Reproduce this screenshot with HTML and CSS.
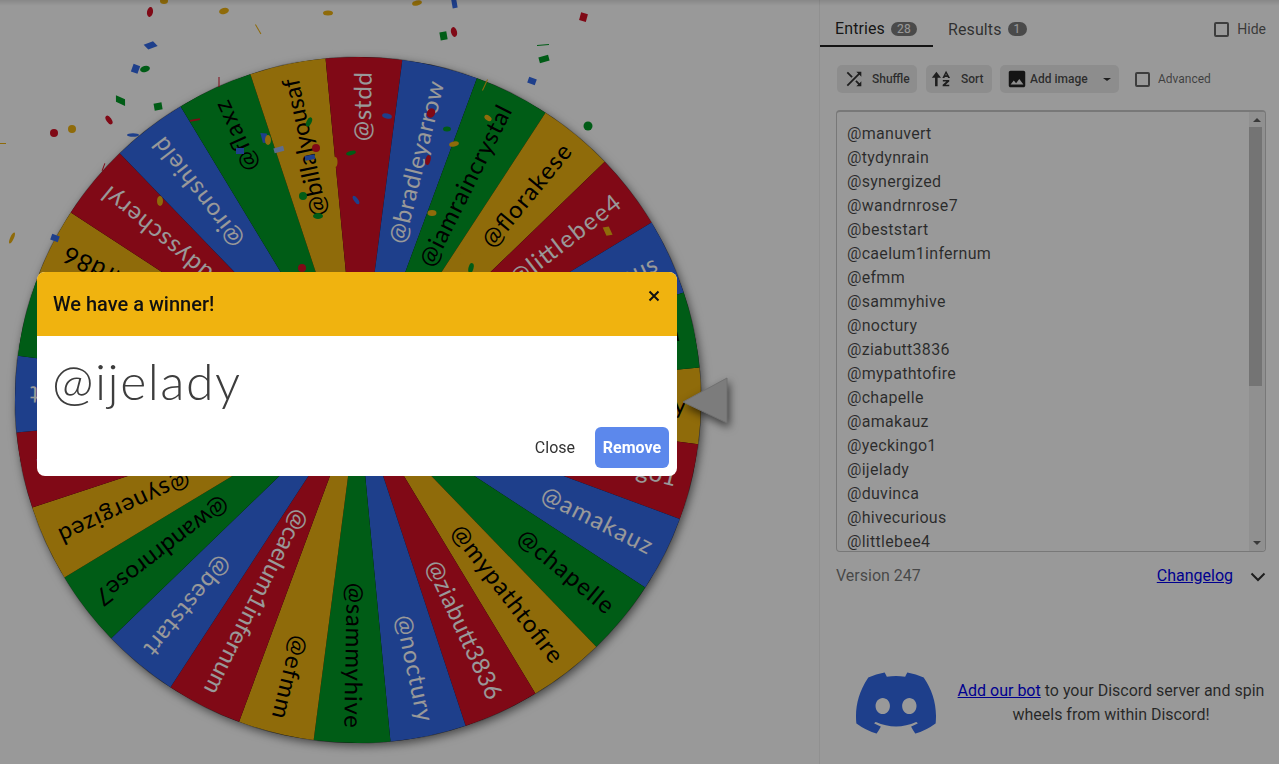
FILE: index.html
```html
<!DOCTYPE html>
<html lang="en">
<head>
<meta charset="utf-8">
<title>Wheel of Names</title>
<link rel="stylesheet" href="styles.css">
</head>
<body>
<div class="app">
  <main class="stage">
    <svg class="canvas" width="819" height="764" viewBox="0 0 819 764" xmlns="http://www.w3.org/2000/svg">
      <defs>
        <path id="w" d="M0 0L340.84 -38.4A343 343 0 0 1 340.84 38.4Z"/>
      </defs>
      <g transform="translate(358 400) rotate(1)">
        <circle class="disc" r="343"/>
        <g class="sl-y"><use href="#w"/><text x="328" y="8" textLength="105">@ijelady</text></g>
        <g class="sl-r" transform="rotate(12.857)"><use href="#w"/><text x="328" y="8" textLength="130">@yeckingo1</text></g>
        <g class="sl-b" transform="rotate(25.714)"><use href="#w"/><text x="328" y="8" textLength="121">@amakauz</text></g>
        <g class="sl-g" transform="rotate(38.571)"><use href="#w"/><text x="328" y="8" textLength="117">@chapelle</text></g>
        <g class="sl-y" transform="rotate(51.429)"><use href="#w"/><text x="328" y="8" textLength="167">@mypathtofire</text></g>
        <g class="sl-r" transform="rotate(64.286)"><use href="#w"/><text x="328" y="8" textLength="150">@ziabutt3836</text></g>
        <g class="sl-b" transform="rotate(77.143)"><use href="#w"/><text x="328" y="8" textLength="108">@noctury</text></g>
        <g class="sl-g" transform="rotate(90)"><use href="#w"/><text x="328" y="8" textLength="145">@sammyhive</text></g>
        <g class="sl-y" transform="rotate(102.857)"><use href="#w"/><text x="328" y="8" textLength="85">@efmm</text></g>
        <g class="sl-r" transform="rotate(115.714)"><use href="#w"/><text x="328" y="8" textLength="204">@caelum1infernum</text></g>
        <g class="sl-b" transform="rotate(128.571)"><use href="#w"/><text x="328" y="8" textLength="122">@beststart</text></g>
        <g class="sl-g" transform="rotate(141.429)"><use href="#w"/><text x="328" y="8" textLength="162">@wandrnrose7</text></g>
        <g class="sl-y" transform="rotate(154.286)"><use href="#w"/><text x="328" y="8" textLength="142">@synergized</text></g>
        <g class="sl-r" transform="rotate(167.143)"><use href="#w"/><text x="328" y="8" textLength="135">@tydynrain</text></g>
        <g class="sl-b" transform="rotate(180)"><use href="#w"/><text x="328" y="8" textLength="125">@manuvert</text></g>
        <g class="sl-g" transform="rotate(192.857)"><use href="#w"/><text x="328" y="8" textLength="110">@elvira2</text></g>
        <g class="sl-y" transform="rotate(205.714)"><use href="#w"/><text x="328" y="8" textLength="130">@richard86</text></g>
        <g class="sl-r" transform="rotate(218.571)"><use href="#w"/><text x="328" y="8" textLength="185">@buddysscheryl</text></g>
        <g class="sl-b" transform="rotate(231.429)"><use href="#w"/><text x="328" y="8" textLength="132">@ironshield</text></g>
        <g class="sl-g" transform="rotate(244.286)"><use href="#w"/><text x="328" y="8" textLength="75">@flaxz</text></g>
        <g class="sl-y" transform="rotate(257.143)"><use href="#w"/><text x="328" y="8" textLength="140">@billalyousaf</text></g>
        <g class="sl-r" transform="rotate(270)"><use href="#w"/><text x="328" y="8" textLength="69">@stdd</text></g>
        <g class="sl-b" transform="rotate(282.857)"><use href="#w"/><text x="328" y="8" textLength="166">@bradleyarrow</text></g>
        <g class="sl-g" transform="rotate(295.714)"><use href="#w"/><text x="328" y="8" textLength="177">@iamraincrystal</text></g>
        <g class="sl-y" transform="rotate(308.571)"><use href="#w"/><text x="328" y="8" textLength="126">@florakese</text></g>
        <g class="sl-r" transform="rotate(321.429)"><use href="#w"/><text x="328" y="8" textLength="133">@littlebee4</text></g>
        <g class="sl-b" transform="rotate(334.286)"><use href="#w"/><text x="328" y="8" textLength="150">@hivecurious</text></g>
        <g class="sl-g" transform="rotate(347.143)"><use href="#w"/><text x="328" y="8" textLength="105">@duvinca</text></g>
      </g>
      <polygon class="pointer" points="683,402 727,378 727,423"/>
      <g class="confetti">
        <ellipse class="c-r" cx="150" cy="12" rx="3" ry="5" transform="rotate(10 150 12)"/>
        <ellipse class="c-y" cx="224" cy="11" rx="5" ry="3" transform="rotate(-15 224 11)"/>
        <ellipse class="c-y" cx="328" cy="13" rx="5" ry="2.5"/>
        <ellipse class="c-y" cx="164" cy="1" rx="4" ry="3"/>
        <rect class="c-y" x="258" y="24" width="1" height="11" transform="rotate(-30 258 30)"/>
        <rect class="c-b" x="122" y="51" width="10" height="6" transform="rotate(-20 127 54) skewX(25)"/>
        <rect class="c-b" x="239" y="48" width="6" height="10" transform="rotate(-15 242 53) skewY(20)"/>
        <rect class="c-b" x="132" y="65" width="7" height="8" transform="rotate(20 136 69)"/>
        <ellipse class="c-g" cx="145" cy="69" rx="5" ry="3" transform="rotate(-15 145 69)"/>
        <rect class="c-g" x="80" y="81" width="10" height="6" transform="rotate(25 85 84) skewX(25)"/>
        <rect class="c-g" x="154" y="103" width="8" height="7" transform="rotate(-10 158 106)"/>
        <rect class="c-r" x="218.500" y="77" width="1" height="10"/>
        <ellipse class="c-r" cx="109" cy="120" rx="2.500" ry="5" transform="rotate(-35 109 120)"/>
        <circle class="c-r" cx="54" cy="133" r="4"/>
        <circle class="c-y" cx="72" cy="129" r="4"/>
        <ellipse class="c-b" cx="133" cy="135" rx="6" ry="1.800"/>
        <rect class="c-y" x="0" y="143" width="6" height="1"/>
        <rect class="c-r" x="190" y="119" width="10" height="2" transform="rotate(-10 195 120)"/>
        <rect class="c-r" x="103" y="163" width="1" height="8" transform="rotate(20 103 167)"/>
        <ellipse class="c-y" cx="160" cy="201" rx="3" ry="5"/>
        <ellipse class="c-y" cx="12" cy="238" rx="1.800" ry="6" transform="rotate(25 12 238)"/>
        <rect class="c-b" x="51" y="235" width="8" height="6" transform="rotate(20 55 238)"/>
        <ellipse class="c-g" cx="309" cy="122" rx="2.500" ry="5" transform="rotate(25 309 122)"/>
        <circle class="c-r" cx="316" cy="148" r="4"/>
        <rect class="c-b" x="305" y="155" width="10" height="5" transform="rotate(-10 310 158)"/>
        <ellipse class="c-g" cx="303" cy="196" rx="4" ry="4"/>
        <ellipse class="c-g" cx="318" cy="216" rx="5" ry="3"/>
        <rect class="c-s" x="274" y="147" width="10" height="5" transform="rotate(-15 279 150)"/>
        <rect class="c-b" x="236" y="148" width="8" height="6"/>
        <ellipse class="c-y" cx="268" cy="140" rx="3" ry="5"/>
        <ellipse class="c-y" cx="335" cy="162" rx="2.500" ry="5"/>
        <ellipse class="c-g" cx="351" cy="153" rx="5" ry="2" transform="rotate(-15 351 153)"/>
        <ellipse class="c-b" cx="387" cy="116" rx="5" ry="2.500" transform="rotate(15 387 116)"/>
        <ellipse class="c-b" cx="356" cy="200" rx="2" ry="5" transform="rotate(-35 356 200)"/>
        <circle class="c-r" cx="302" cy="268" r="4"/>
        <ellipse class="c-y" cx="417" cy="3" rx="5" ry="2.500" transform="rotate(-15 417 3)"/>
        <rect class="c-b" x="452" y="-1" width="5" height="9" transform="rotate(-10 455 4)"/>
        <rect class="c-g" x="440" y="32" width="7" height="8" transform="rotate(-10 443 36)"/>
        <ellipse class="c-r" cx="454" cy="32" rx="3" ry="5" transform="rotate(-15 454 32)"/>
        <rect class="c-r" x="580" y="13" width="7" height="8" transform="rotate(15 583 17)"/>
        <rect class="c-g" x="537" y="44.500" width="12" height="1" transform="rotate(-5 543 45)"/>
        <rect class="c-g" x="539" y="56" width="10" height="6" transform="rotate(-15 544 59)"/>
        <rect class="c-b" x="528" y="78" width="8" height="6" transform="rotate(20 532 81)"/>
        <rect class="c-y" x="543" y="94" width="6" height="9" transform="rotate(-25 546 99) skewY(15)"/>
        <circle class="c-g" cx="588" cy="126" r="4.500"/>
        <rect class="c-y" x="484.500" y="79" width="1" height="12" transform="rotate(25 485 85)"/>
        <ellipse class="c-r" cx="431" cy="113" rx="4" ry="5" transform="rotate(30 431 113)"/>
        <ellipse class="c-g" cx="447" cy="129" rx="4" ry="2.500"/>
        <ellipse class="c-y" cx="454" cy="144" rx="5" ry="2.500" transform="rotate(-15 454 144)"/>
        <ellipse class="c-r" cx="428" cy="160" rx="2.500" ry="5" transform="rotate(15 428 160)"/>
        <ellipse class="c-y" cx="488" cy="118" rx="4" ry="2.500" transform="rotate(35 488 118)"/>
        <ellipse class="c-y" cx="432" cy="213" rx="4.500" ry="3"/>
        <ellipse class="c-y" cx="463" cy="250" rx="1.800" ry="5" transform="rotate(20 463 250)"/>
        <ellipse class="c-g" cx="471" cy="268" rx="2.500" ry="5" transform="rotate(15 471 268)"/>
      </g>
    </svg>
  </main>

  <aside class="side">
    <div class="tabs">
      <div class="tab tab-on">Entries<span class="badge badge-wide">28</span></div>
      <div class="tab">Results<span class="badge">1</span></div>
      <label class="hide"><span class="box"></span>Hide</label>
    </div>

    <div class="tools">
      <div class="btn btn-shuffle">
        <svg class="ico" viewBox="0 0 24 24"><path d="M10.59 9.17L5.41 4 4 5.41l5.17 5.17 1.42-1.41zM14.5 4l2.04 2.04L4 18.59 5.41 20 17.96 7.46 20 9.5V4h-5.5zm.33 9.41l-1.41 1.41 3.13 3.13L14.5 20H20v-5.5l-2.04 2.04-3.13-3.13z"/></svg>
        <span>Shuffle</span>
      </div>
      <div class="btn btn-sort">
        <svg class="ico" viewBox="0 0 24 24"><path d="M7 4L2 10.500h3.500V20h2.800v-9.500H12zM17.500 3L13.500 11h2.200l.5-1.300h3l.5 1.300h2.200zM16.800 8l.7-1.900.7 1.900zM14 13h7v1.800L17 18.300h4V20h-7.200v-1.800l4-3.500H14z"/></svg>
        <span>Sort</span>
      </div>
      <div class="btn btn-image">
        <svg class="ico ico-img" viewBox="0 0 24 24"><path d="M21 19V5c0-1.100-.9-2-2-2H5c-1.100 0-2 .9-2 2v14c0 1.100.9 2 2 2h14c1.100 0 2-.9 2-2zM8.500 13.500l2.500 3.010L14.500 12l4.500 6H5l3.500-4.500z"/></svg>
        <span>Add image</span>
        <i class="caret"></i>
      </div>
      <label class="adv"><span class="box"></span>Advanced</label>
    </div>

    <div class="entries">
      <div class="lines">
        <div>@manuvert</div>
        <div>@tydynrain</div>
        <div>@synergized</div>
        <div>@wandrnrose7</div>
        <div>@beststart</div>
        <div>@caelum1infernum</div>
        <div>@efmm</div>
        <div>@sammyhive</div>
        <div>@noctury</div>
        <div>@ziabutt3836</div>
        <div>@mypathtofire</div>
        <div>@chapelle</div>
        <div>@amakauz</div>
        <div>@yeckingo1</div>
        <div>@ijelady</div>
        <div>@duvinca</div>
        <div>@hivecurious</div>
        <div>@littlebee4</div>
      </div>
      <div class="sbar">
        <i class="arrow arrow-up"></i>
        <div class="thumb"></div>
        <i class="arrow arrow-down"></i>
      </div>
    </div>

    <div class="version">
      <span class="ver">Version 247</span>
      <a class="log" href="#">Changelog</a>
      <svg class="chev" viewBox="0 0 16 10"><path d="M1.500 1.500L8 8l6.500-6.500"/></svg>
    </div>

    <div class="discord">
      <svg class="dlogo" viewBox="0 0 24 24" preserveAspectRatio="none"><path d="M20.317 4.37a19.791 19.791 0 0 0-4.885-1.515.074.074 0 0 0-.079.037c-.21.375-.444.864-.608 1.25a18.27 18.27 0 0 0-5.487 0 12.64 12.64 0 0 0-.617-1.25.077.077 0 0 0-.079-.037A19.736 19.736 0 0 0 3.677 4.37a.07.07 0 0 0-.032.027C.533 9.046-.32 13.58.099 18.057a.082.082 0 0 0 .031.057 19.9 19.9 0 0 0 5.993 3.03.078.078 0 0 0 .084-.028 14.09 14.09 0 0 0 1.226-1.994.076.076 0 0 0-.041-.106 13.107 13.107 0 0 1-1.872-.892.077.077 0 0 1-.008-.128 10.2 10.2 0 0 0 .372-.292.074.074 0 0 1 .077-.01c3.928 1.793 8.18 1.793 12.062 0a.074.074 0 0 1 .078.01c.12.098.246.198.373.292a.077.077 0 0 1-.006.127 12.299 12.299 0 0 1-1.873.892.077.077 0 0 0-.041.107c.36.698.772 1.362 1.225 1.993a.076.076 0 0 0 .084.028 19.839 19.839 0 0 0 6.002-3.03.077.077 0 0 0 .032-.054c.5-5.177-.838-9.674-3.549-13.66a.061.061 0 0 0-.031-.03zM8.02 15.33c-1.183 0-2.157-1.085-2.157-2.419 0-1.333.956-2.419 2.157-2.419 1.21 0 2.176 1.096 2.157 2.42 0 1.333-.956 2.418-2.157 2.418zm7.975 0c-1.183 0-2.157-1.085-2.157-2.419 0-1.333.955-2.419 2.157-2.419 1.21 0 2.176 1.096 2.157 2.42 0 1.333-.946 2.418-2.157 2.418z"/></svg>
      <p class="dtext"><a href="#">Add our bot</a> to your Discord server and spin wheels from within Discord!</p>
    </div>
  </aside>
</div>

<div class="topshade"></div>
<div class="scrim"></div>

<div class="dialog">
  <header class="dhead">
    <h2>We have a winner!</h2>
    <svg class="x" viewBox="0 0 12 12"><path d="M1.500 1.500l9 9M10.500 1.500l-9 9"/></svg>
  </header>
  <div class="dbody">@ijelady</div>
  <footer class="dfoot">
    <span class="dclose">Close</span>
    <span class="dremove">Remove</span>
  </footer>
</div>
</body>
</html>
```
FILE: styles.css
```css
* { box-sizing: border-box; }
html, body { margin: 0; height: 100%; overflow: hidden; background: #fff; }
body { font-family: Roboto, "Liberation Sans", sans-serif; color: rgba(0,0,0,.87); }

.app { display: flex; width: 1279px; height: 764px; }
.stage { width: 819px; height: 764px; flex: none; overflow: hidden; }
.canvas { display: block; }

/* wheel */
.disc { fill: #000; filter: drop-shadow(2px 3px 5px rgba(0,0,0,.55)); }
.sl-y { fill: #eeb211; }
.sl-r { fill: #d50f25; }
.sl-b { fill: #3369e8; }
.sl-g { fill: #009925; }
.canvas text { font-family: Lato, "Noto Sans", sans-serif; font-size: 24px; text-anchor: end; }
.sl-y text, .sl-g text { fill: #000; }
.sl-r text, .sl-b text { fill: #fff; }
.pointer { fill: #cfcfcf; stroke: #bbb; stroke-width: 1; stroke-linejoin: round; filter: drop-shadow(2px 4px 4px rgba(0,0,0,.6)); }
.c-r { fill: #d50f25; }
.c-b { fill: #3369e8; }
.c-g { fill: #009925; }
.c-y { fill: #eeb211; }
.c-s { fill: #9db6ee; }

/* side panel */
.side { width: 460px; flex: none; border-left: 1px solid #f0f0f0; padding-top: 11px; display: flex; flex-direction: column; }
.tabs { display: flex; align-items: center; height: 36px; padding-right: 13px; }
.tab { height: 36px; display: flex; align-items: center; padding: 0 16px 0 15px; font-size: 16px; color: rgba(0,0,0,.7); letter-spacing: .1px; }
.tab-on { width: 113px; color: rgba(0,0,0,.87); border-bottom: 2px solid #222; padding-top: 1px; }
.badge { margin-left: 6px; height: 14px; min-width: 19px; border-radius: 7px; padding: 0 5px; background: #7c7c7c; color: #fff; font-size: 12px; line-height: 14px; text-align: center; }
.badge-wide { min-width: 26px; }
.hide { margin-left: auto; display: flex; align-items: center; gap: 8px; font-size: 14px; color: rgba(0,0,0,.65); }
.box { width: 15px; height: 15px; border: 2px solid #666; border-radius: 2px; display: block; flex: none; }

.tools { display: flex; align-items: center; margin: 18px 0 0 17px; height: 28px; font-size: 12px; font-weight: 500; color: rgba(0,0,0,.7); }
.btn { height: 28px; display: flex; align-items: center; background: #ececec; border-radius: 5px; }
.ico { width: 22px; height: 22px; display: block; flex: none; fill: #333; }
.btn-shuffle { width: 80px; padding-left: 6px; gap: 7px; margin-right: 9px; }
.btn-sort { width: 66px; padding-left: 4px; gap: 9px; margin-right: 8px; }
.btn-image { width: 119px; padding-left: 6px; gap: 2px; margin-right: 16px; }
.ico-img { fill: #222; }
.caret { width: 0; height: 0; margin-left: 13px; border-left: 4px solid transparent; border-right: 4px solid transparent; border-top: 3px solid #333; }
.adv { display: flex; align-items: center; gap: 8px; font-weight: 400; color: rgba(0,0,0,.6); }

.entries { margin: 17px 0 0 16px; width: 430px; height: 442px; border: 1px solid #c8c8c8; border-top-width: 2px; border-radius: 4px; display: flex; overflow: hidden; background: #fff; }
.lines { flex: 1; padding: 10px 0 0 10px; font-size: 16px; line-height: 24px; letter-spacing: .3px; color: rgba(0,0,0,.72); overflow: hidden; }
.sbar { width: 16px; flex: none; background: #f1f1f1; position: relative; display: flex; flex-direction: column; align-items: center; }
.arrow { width: 0; height: 0; border-left: 4px solid transparent; border-right: 4px solid transparent; flex: none; }
.arrow-up { margin-top: 6px; border-bottom: 4px solid #606060; }
.arrow-down { margin-top: auto; margin-bottom: 6px; border-top: 4px solid #606060; }
.thumb { width: 13px; height: 259px; margin: 5px 3px 0 0; background: #c1c1c1; flex: none; }

.version { display: flex; align-items: center; margin: 11px 13px 0 16px; height: 24px; font-size: 16px; }
.ver { color: rgba(0,0,0,.55); }
.log { margin-left: auto; color: #0000ee; text-decoration: underline; }
.chev { width: 16px; height: 10px; margin: 3px 0 0 17px; fill: none; stroke: #333; stroke-width: 2; }

.discord { display: flex; align-items: center; margin: 76px 14px 0 36px; }
.dlogo { width: 80px; height: 80px; flex: none; fill: #3369e8; }
.dtext { margin: 0 0 0 21px; font-size: 16px; line-height: 24px; text-align: center; color: rgba(0,0,0,.75); }
.dtext a { color: #0000ee; }

/* overlay */
.topshade { position: fixed; left: 0; right: 0; top: 0; height: 6px; background: linear-gradient(rgba(0,0,0,.12), rgba(0,0,0,0)); }
.scrim { position: fixed; inset: 0; background: rgba(0,0,0,.4); }

.dialog { position: fixed; left: 37px; top: 272px; width: 640px; height: 204px; background: #fff; border-radius: 8px; overflow: hidden; display: flex; flex-direction: column; }
.dhead { height: 64px; flex: none; background: #f0b30f; position: relative; display: flex; align-items: center; padding-left: 16px; }
.dhead h2 { margin: 0; font-size: 20px; font-weight: 500; line-height: 64px; color: #111; }
.x { position: absolute; right: 17px; top: 18px; width: 12px; height: 12px; fill: none; stroke: #111; stroke-width: 2; }
.dbody { height: 91px; flex: none; padding: 9px 0 0 15px; font-family: Lato, sans-serif; font-weight: 300; font-size: 50px; line-height: 72px; color: #3d3d3d; letter-spacing: 1.5px; }
.dfoot { display: flex; align-items: center; justify-content: flex-end; padding-right: 8px; height: 41px; }
.dclose { font-size: 16px; color: #333; margin-right: 20px; }
.dremove { width: 74px; height: 41px; background: #5c88ec; border-radius: 6px; color: #fff; font-size: 16px; font-weight: 700; line-height: 41px; text-align: center; }
```
